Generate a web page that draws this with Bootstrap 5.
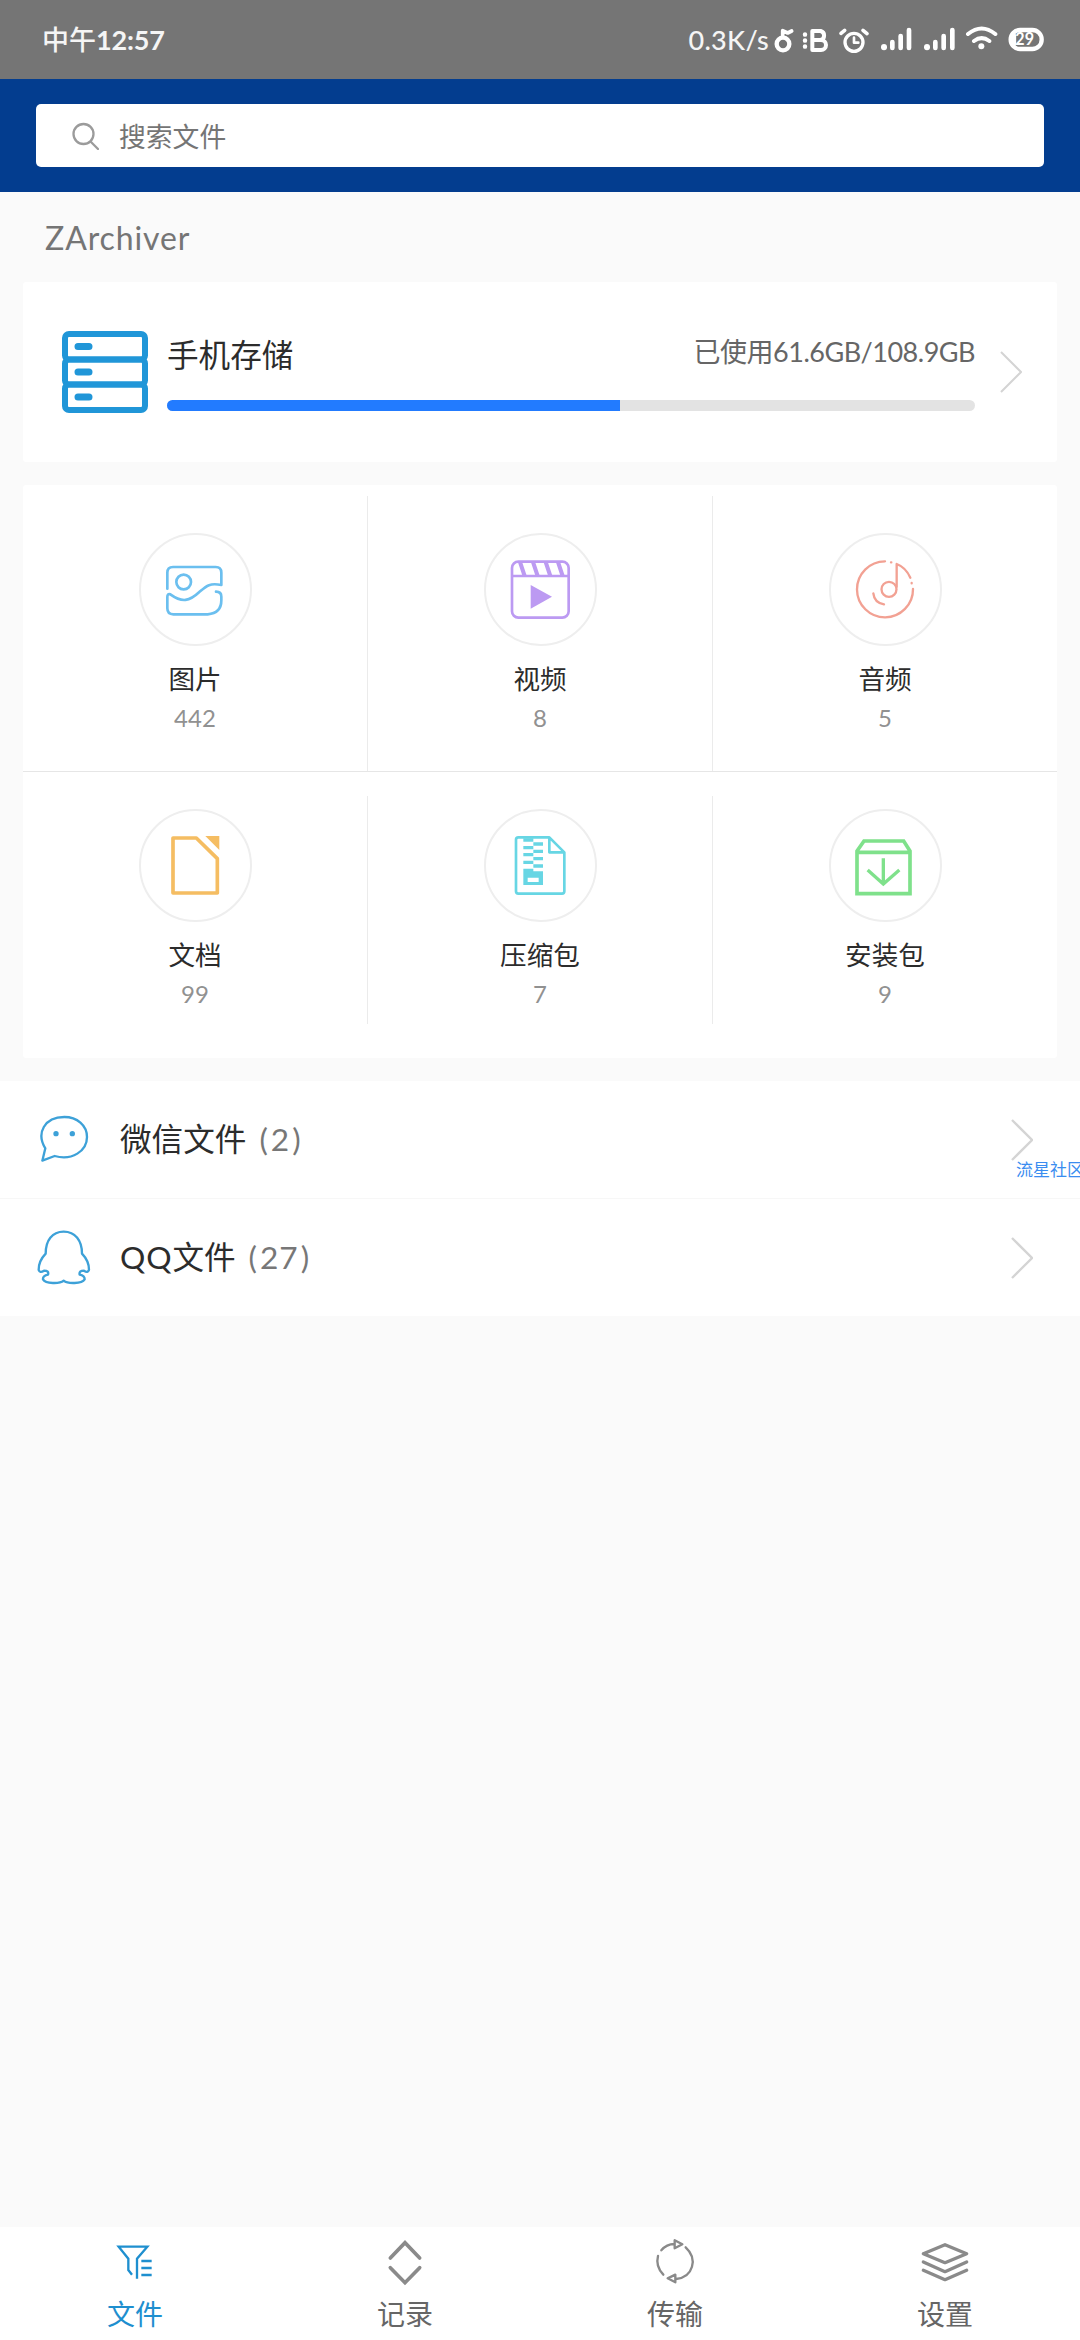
<!DOCTYPE html>
<html lang="zh-CN">
<head>
<meta charset="utf-8">
<meta name="viewport" content="width=device-width, initial-scale=1">
<title>ZArchiver</title>
<link href="https://cdn.jsdelivr.net/npm/bootstrap@5.3.0/dist/css/bootstrap.min.css" rel="stylesheet">
<style>
body{font-family:Lato,"Noto Sans CJK SC",sans-serif;background:#fafafa;color:#2c2c2c;width:1080px;height:2340px;line-height:1;overflow:hidden}
svg{display:block;flex:none;fill:none}
.statusbar{height:79px;background:#757575;color:#f5f5f5;padding:0 36px 0 42px}
.clock{font-size:27px;font-weight:500;line-height:80px}
.clock span{font-weight:700;letter-spacing:-.2px}
.netspeed{font-size:27px;font-weight:500;line-height:80px;margin-right:5px;letter-spacing:.3px}
.topbar{height:113px;background:#033d8f;padding:25px 36px}
.searchbox{height:63px;background:#fff;border-radius:5px;padding:0 36px;font-size:26.800px;line-height:30px;color:#757575;gap:20px}
.searchbox span{padding-top:2px}
.apptitle{height:90px;padding:0 45px;line-height:91px;font-size:32px;letter-spacing:.9px;color:#757575}
.panel{margin:0 23px;background:#fff;border-radius:3px}
.storage{height:180px;padding:0 35px 0 38px}
.storage-body{width:808px;margin-left:18px;height:180px;padding-top:53px}
.storage-name{font-size:31.6px;line-height:40px}
.storage-used{font-size:27px;line-height:34px;letter-spacing:-.5px;color:#666}
.usage{height:11px;border-radius:6px;background:#e3e3e3;margin-top:25px}
.usage .progress-bar{background:#227bff}
.tiles{margin-top:23px;height:573px;padding-top:11px}
.tile-row{height:275px}
.tile-row+.tile-row{border-top:1px solid #e6e6e6;padding-top:24px;height:253px}
.tile{padding-top:37px;font-size:26.6px;border-right:1px solid #ebebeb}
.tile-row+.tile-row .tile{padding-top:13px}
.tile:last-child{border-right:0}
.disc{width:113px;height:113px;border:2px solid #eee;border-radius:50%}
.tile-name{line-height:34px;margin-top:16px}
.tile-count{font-size:24px;line-height:30px;color:#919191;margin-top:7px}
.folders{margin-top:23px;background:#fff}
.folder{height:117px;padding:0 47px 0 37px;font-size:31.6px}
.folder+.folder{border-top:1px solid #f7f7f7;height:118px}
.folder-name{margin-left:29px;flex:1}
.folder-name span{color:#777;margin-left:13px;letter-spacing:1px}
.folder-name i{font-style:normal;margin:0 2px}
.folder-name b{font-weight:400;letter-spacing:.9px}
.watermark{position:absolute;top:1160px;left:1016px;width:64px;overflow:hidden;white-space:nowrap;font-size:17px;line-height:20px;color:#3a8df0}
.tabs{margin-top:auto;height:113px;background:#fff;color:#666}
.tab{padding-top:10px;font-size:28px}
.tab span{line-height:36px;margin-top:9px}
.tab.active{color:#1e8fcf}
</style>
<script src="https://cdn.jsdelivr.net/npm/bootstrap@5.3.0/dist/js/bootstrap.bundle.min.js"></script>
</head>
<body class="d-flex flex-column position-relative">
<header>
  <div class="statusbar d-flex">
    <div class="clock">中午<span>12:57</span></div>
    <div class="netspeed ms-auto">0.3K/s</div>
    <svg class="mt-4" width="270" height="30" viewBox="343 72 810 90" stroke="#fff" stroke-linecap="round" stroke-linejoin="round">
      <circle cx="370" cy="132" r="19" stroke-width="13"/><path d="M369 109V92L384 99L396 93" stroke-width="11"/>
      <path d="M436 103v1M436 121v1M436 139v1" stroke-width="13"/>
      <path d="M458 93h25a14 14 0 0 1 0 27h-25zM458 120h26a15 15 0 0 1 0 30h-26z" stroke-width="12"/>
      <circle cx="583" cy="127" r="27" stroke-width="10"/><path d="M583 113v15h13" stroke-width="8"/><path d="M544 100l11-9M610 91l12 10" stroke-width="11"/>
      <path d="M673 141v1" stroke-width="18"/><path d="M698 126v18M723 108v36M748 90v54" stroke-width="14"/>
      <path d="M802 141v1" stroke-width="18"/><path d="M827 126v18M852 108v36M878 90v54" stroke-width="14"/>
      <path d="M925 102q41-33 82 0M943 123q23-17 46 0" stroke-width="12"/><circle cx="965" cy="139" r="9" fill="#fff" stroke="none"/>
      <rect x="1053" y="90" width="93" height="57" rx="28" stroke-width="13"/>
      <path d="M1063 106v26" stroke-width="13"/><text x="1067" y="136" font-size="50" font-weight="700" textLength="56" lengthAdjust="spacingAndGlyphs" fill="#fff" stroke="none" font-family="Lato">29</text>
    </svg>
  </div>
  <div class="topbar">
    <div class="searchbox d-flex align-items-center">
      <svg width="27" height="28" viewBox="0 0 27 28" stroke="#9b9b9b" stroke-width="2.300" stroke-linecap="round"><circle cx="11.5" cy="12" r="10"/><path d="M19 20l7 7"/></svg>
      <span>搜索文件</span>
    </div>
  </div>
</header>
<div class="apptitle">ZArchiver</div>
<main>
  <section class="panel storage d-flex align-items-center">
    <svg width="88" height="84" viewBox="0 0 88 84" stroke="#2096d8" stroke-width="6"><rect x="4" y="4" width="80" height="25.500" rx="4"/><rect x="4" y="29.500" width="80" height="25" rx="4"/><rect x="4" y="54.500" width="80" height="25.500" rx="4"/><path d="M17 16.500h11M17 42h11M17 67h11" stroke-width="7" stroke-linecap="round"/></svg>
    <div class="storage-body">
      <div class="d-flex justify-content-between"><span class="storage-name">手机存储</span><span class="storage-used">已使用61.6GB/108.9GB</span></div>
      <div class="progress usage"><div class="progress-bar" style="width:56.1%"></div></div>
    </div>
    <svg class="ms-auto" width="22" height="42" viewBox="0 0 22 42" stroke="#d4d4d4" stroke-width="2"><path d="M1 1l20 20L1 41"/></svg>
  </section>
  <section class="panel tiles">
    <div class="tile-row row g-0">
      <div class="tile col d-flex flex-column align-items-center">
        <div class="disc d-flex align-items-center justify-content-center"><svg width="113" height="113" viewBox="115 99 339 339" stroke="#6bbfef" stroke-width="8" stroke-linecap="round" stroke-linejoin="round"><path d="M200 266V218q0-17 17-17H345q17 0 17 17v37c-36-7-45 3-66 21-30 28-51 33-87 7q-9-3-9 8v34q0 18 18 18H321q41-3 41-42V290q0-15-16-15"/><circle cx="249" cy="246" r="22"/></svg></div>
        <div class="tile-name">图片</div><div class="tile-count">442</div>
      </div>
      <div class="tile col d-flex flex-column align-items-center">
        <div class="disc d-flex align-items-center justify-content-center"><svg width="113" height="113" viewBox="1150 99 339 339" stroke="#bc9af2" stroke-width="8"><rect x="1234" y="185" width="170" height="168" rx="19"/><path d="M1234 228h170"/><path d="M1258 186l14 42M1297 186l14 42M1335 186l14 42M1372 186l14 42" stroke-width="12"/><path d="M1290 255v71l64-36z" fill="#bc9af2" stroke="none"/></svg></div>
        <div class="tile-name">视频</div><div class="tile-count">8</div>
      </div>
      <div class="tile col d-flex flex-column align-items-center">
        <div class="disc d-flex align-items-center justify-content-center"><svg width="113" height="113" viewBox="685 99 339 339" stroke="#f2a193" stroke-width="7" stroke-linecap="round" stroke-linejoin="round"><path d="M853 184a84 84 0 1 0 84 83M871 187h1M933 249v1M888 260V192q27 10 41 41M818 280q3 28 32 33"/><circle cx="865" cy="268" r="22.500"/></svg></div>
        <div class="tile-name">音频</div><div class="tile-count">5</div>
      </div>
    </div>
    <div class="tile-row row g-0">
      <div class="tile col d-flex flex-column align-items-center">
        <div class="disc d-flex align-items-center justify-content-center"><svg width="113" height="113" viewBox="115 87 339 339" stroke="#f5bd62" stroke-width="11" stroke-linejoin="round"><path d="M217 174h70l63 62v103H217z"/><path d="M314 168h42v42z" fill="#f5bd62" stroke="none"/></svg></div>
        <div class="tile-name">文档</div><div class="tile-count">99</div>
      </div>
      <div class="tile col d-flex flex-column align-items-center">
        <div class="disc d-flex align-items-center justify-content-center"><svg width="113" height="113" viewBox="1150 87 339 339" stroke="#67d6e4" stroke-width="8" stroke-linejoin="round"><path d="M1253 172h93l45 45v117q0 7-7 7h-131q-7 0-7-7V179q0-7 7-7zM1346 172v45h45"/><path d="M1268 180h30M1268 203h30M1268 224h30M1268 247h30M1298 192h29M1298 214h29M1298 236h29M1298 258h29" stroke-width="10"/><path fill="#67d6e4" fill-rule="evenodd" stroke="none" d="M1268 266h30v8h29v41h-59zM1281 293v13h33v-13z"/></svg></div>
        <div class="tile-name">压缩包</div><div class="tile-count">7</div>
      </div>
      <div class="tile col d-flex flex-column align-items-center">
        <div class="disc d-flex align-items-center justify-content-center"><svg width="113" height="113" viewBox="685 87 339 339" stroke="#7fe18b" stroke-width="11"><path d="M769 341V213l21-30h119l19 30v128zM769 217h159"/><path d="M848 235v78M801 270l47 42 48-42" stroke-width="10"/></svg></div>
        <div class="tile-name">安装包</div><div class="tile-count">9</div>
      </div>
    </div>
  </section>
  <section class="folders">
    <div class="folder d-flex align-items-center">
      <svg width="54" height="54" viewBox="111 129 162 162" stroke="#3da1d8" stroke-width="7" stroke-linejoin="round"><path d="M127 272l9-37C108 190 133 141 193 141c38 0 68 25 68 60 0 42-45 72-97 57z"/><g fill="#3da1d8" stroke="none"><circle cx="168" cy="191" r="8"/><circle cx="217" cy="191" r="8"/></g></svg>
      <div class="folder-name">微信文件<span>(<i>2</i>)</span></div>
      <svg width="22" height="42" viewBox="0 0 22 42" stroke="#d4d4d4" stroke-width="2.300"><path d="M1 1l20 20L1 41"/></svg>
    </div>
    <div class="folder d-flex align-items-center">
      <svg width="54" height="54" viewBox="111 481 162 162" overflow="visible" stroke="#3da1d8" stroke-width="7" stroke-linejoin="round"><path d="M191 483c-35 0-54 27-54 66q-21 22-21 48 3 12 16 3 16 0 12 12-16 3-15 14c8 14 50 14 62 4 12 10 54 10 63-4q0-11-15-14-3-12 13-12 12 8 15-3 0-26-21-48c0-39-20-66-55-66z"/></svg>
      <div class="folder-name"><b>QQ</b>文件<span>(<i>27</i>)</span></div>
      <svg width="22" height="42" viewBox="0 0 22 42" stroke="#d4d4d4" stroke-width="2.300"><path d="M1 1l20 20L1 41"/></svg>
    </div>
  </section>
</main>
<div class="watermark">流星社区</div>
<nav class="tabs row g-0">
  <div class="tab active col d-flex flex-column align-items-center"><svg width="50" height="50" viewBox="150 80 150 150" stroke="#1e8fcf" stroke-width="7"><path d="M216 193l-11-14v-34l-29-36h86l-31 36v60M244 152h31M244 173h31M244 194h31"/></svg><span>文件</span></div>
  <div class="tab col d-flex flex-column align-items-center"><svg width="50" height="50" viewBox="960 80 150 150" stroke="#8a8a8a" stroke-width="11" stroke-linecap="round"><path d="M991 143l44-46 44 46M991 172l44 45 44-45"/></svg><span>记录</span></div>
  <div class="tab col d-flex flex-column align-items-center"><svg width="50" height="50" viewBox="150 80 150 150" stroke="#8a8a8a" stroke-width="7" stroke-linecap="round" stroke-linejoin="round"><path d="M184 120q16-19 39-19M224 90v24l23-12zM257 111c37 34 23 90-29 95M226 193v23l-23-12zM190 193q-24-25-16-56"/></svg><span>传输</span></div>
  <div class="tab col d-flex flex-column align-items-center"><svg width="50" height="50" viewBox="960 80 150 150" stroke="#8a8a8a" stroke-width="10" stroke-linecap="round" stroke-linejoin="round"><path d="M970 130l65-27 65 27-65 27zM970 155l65 29 65-29M970 180l65 28 65-28"/></svg><span>设置</span></div>
</nav>
</body>
</html>
